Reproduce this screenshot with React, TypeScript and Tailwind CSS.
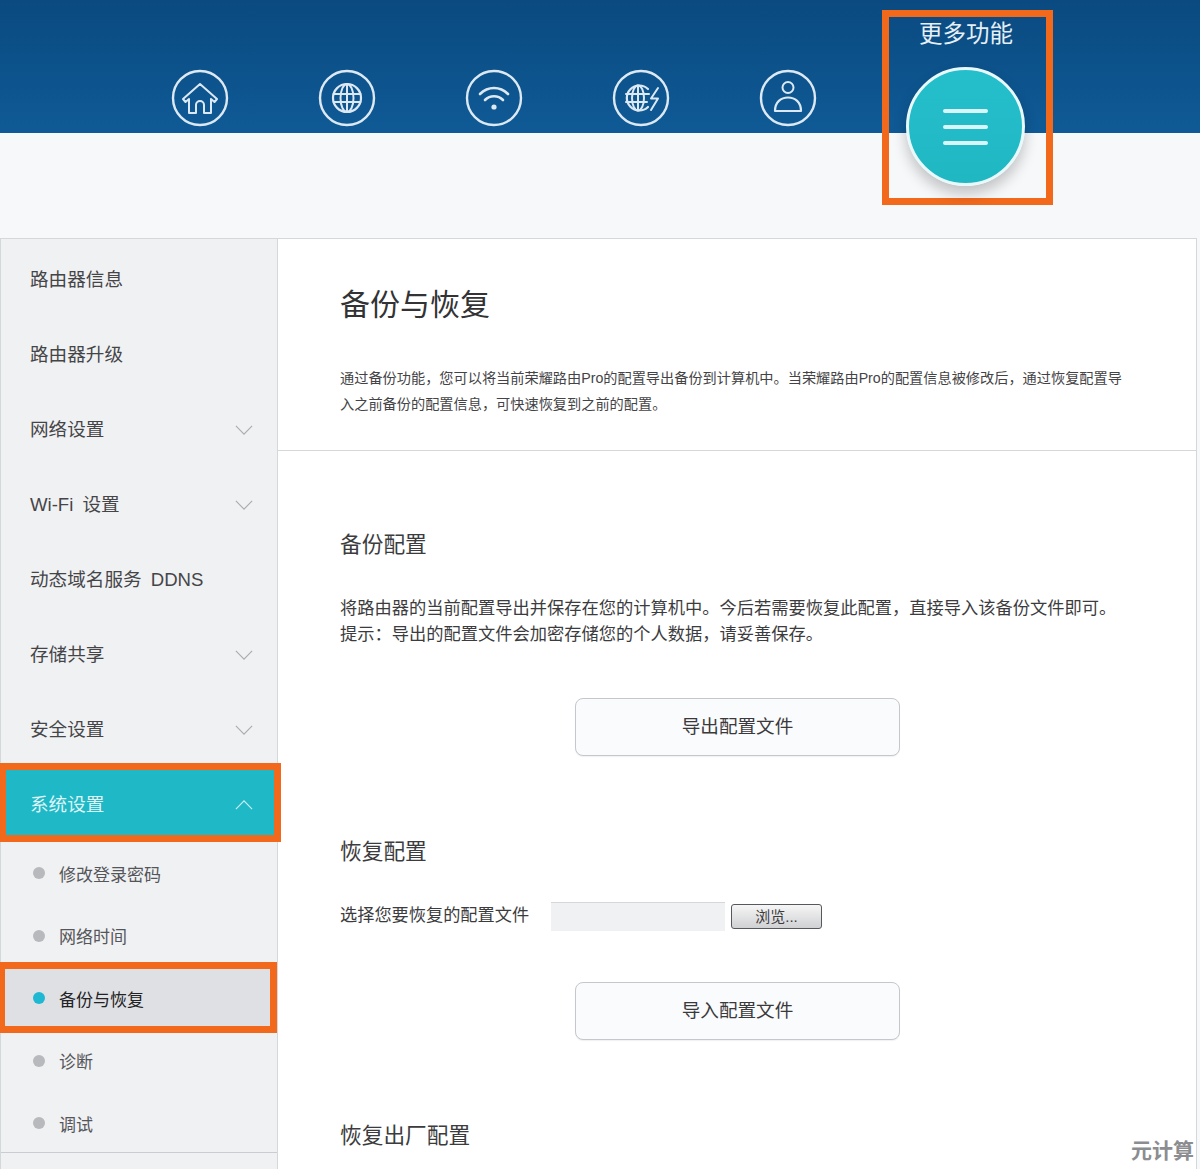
import type { ReactNode } from 'react';

const font = "font-['Liberation_Sans','Noto_Sans_CJK_SC',sans-serif]";

function Ring({ children }: { children: ReactNode }) {
  return (
    <svg width="58" height="58" viewBox="0 0 58 58" fill="none" stroke="#dce9f3" strokeWidth="2" strokeLinecap="round" strokeLinejoin="round">
      <circle cx="29" cy="29" r="27" strokeWidth="2.4" />
      {children}
    </svg>
  );
}

const navIcons = [
  <Ring key="home">
    <path d="M12 30 29 15 46 30 43.5 33 40 30V44H33V36A4 4 0 0 0 25 36V44H18V30L14.500 33Z" />
  </Ring>,
  <Ring key="globe">
    <circle cx="29" cy="29" r="14" strokeWidth="2.2" />
    <ellipse cx="29" cy="29" rx="6.5" ry="14" />
    <path d="M29 15V43M15.500 25H42.500M15.500 33H42.500" />
  </Ring>,
  <Ring key="wifi">
    <path d="M15 25C23 17 35 17 43 25M20 31C25 26 33 26 38 31" strokeWidth="2.6" />
    <circle cx="29" cy="38" r="2.6" fill="#dce9f3" stroke="none" />
  </Ring>,
  <Ring key="globe-bolt">
    <path d="M36 20A12.500 12.500 0 1 0 36 38" strokeWidth="2.2" />
    <ellipse cx="26" cy="29" rx="6" ry="12.500" />
    <path d="M26 16.500V41.500M14 25H37M14 33H35M46 19 39 29.500H46L39 41" />
  </Ring>,
  <Ring key="user">
    <circle cx="29" cy="18.500" r="5.500" />
    <path d="M16 42C16 33 22 28.500 29 28.500 36 28.500 42 33 42 42Z" strokeWidth="2.2" />
  </Ring>,
];

const menu: { label: string; chevron?: boolean }[] = [
  { label: '路由器信息' },
  { label: '路由器升级' },
  { label: '网络设置', chevron: true },
  { label: 'Wi-Fi 设置', chevron: true },
  { label: '动态域名服务 DDNS' },
  { label: '存储共享', chevron: true },
  { label: '安全设置', chevron: true },
];

const subMenu = ['修改登录密码', '网络时间', '备份与恢复', '诊断', '调试'];

function Chevron({ up, color }: { up?: boolean; color: string }) {
  return (
    <svg width="18" height="10" viewBox="0 0 20 11" fill="none" stroke={color} strokeWidth="1.3" className="mr-[24px]">
      <path d={up ? 'M1 10 10 1 19 10' : 'M1 1 10 10 19 1'} />
    </svg>
  );
}

function ActionButton({ label }: { label: string }) {
  return (
    <div className="ml-[235px] w-[325px] h-[58px] rounded-lg border border-[#c4c8cc] bg-[#fafbfc] flex items-center justify-center text-[18.6px] text-[#3a3a3c] shadow-[0_1px_1px_rgba(0,0,0,0.06)]">
      {label}
    </div>
  );
}

export default function App() {
  return (
    <div className={`${font} relative w-[1200px] h-[1169px] overflow-hidden bg-[#f7f8fa] text-[#3c3c3e]`}>
      <header className="h-[133px] bg-gradient-to-b from-[#0a4a80] to-[#0f5a96] flex items-end pl-[171px] pb-[6px] gap-[89px]">
        {navIcons}
      </header>

      {/* 更多功能 button hangs over the header edge */}
      <div className="absolute left-[882px] top-[10px] w-[171px] h-[195px] border-[7px] border-[#f2691c] z-10 flex flex-col items-center">
        <span className="-mt-[1px] text-[23.500px] leading-[36px] text-[#e6eff6] -ml-[3px]">更多功能</span>
        <div className="mt-[15px] -ml-[5px] shrink-0 w-[119px] h-[119px] rounded-full bg-gradient-to-b from-[#25bfcc] to-[#1fb7c2] border-[3px] border-[#e8f9fb] shadow-[0_8px_14px_rgba(0,0,0,0.22)] flex flex-col items-center justify-center gap-[12px]">
          <span className="w-[45px] h-[4px] bg-[#d8f6f7] rounded-sm" />
          <span className="w-[45px] h-[4px] bg-[#d8f6f7] rounded-sm" />
          <span className="w-[45px] h-[4px] bg-[#d8f6f7] rounded-sm" />
        </div>
      </div>

      <div className="mt-[105px] mr-[3px] flex h-[931px] border-t border-[#d5d8db]">
        <aside className="w-[278px] shrink-0 bg-[#f0f1f3] border-x border-[#d5d8db] pt-[3px] text-[18.600px] text-[#454548]">
          {menu.map((item) => (
            <div key={item.label} className="h-[75px] flex items-center justify-between pl-[29px]">
              <span className="[word-spacing:4px]">{item.label}</span>
              {item.chevron && <Chevron color="#a9adb2" />}
            </div>
          ))}

          <div className="relative h-[75px] -ml-px bg-[#1fb8c6] flex items-center justify-between pl-[30px] text-[#dff5f6]">
            <span>系统设置</span>
            <Chevron up color="#cdeef1" />
            <div className="absolute left-0 top-[-4px] w-[281px] h-[79px] border-[7px] border-l-[6px] border-[#f2691c]" />
          </div>

          <div className="border-b border-[#c9ccd0] h-[311px] text-[17px] text-[#55565a]">
            {subMenu.map((label) => {
              const active = label === '备份与恢复';
              return (
                <div
                  key={label}
                  className={`relative h-[62.500px] flex items-center pl-[32px] gap-[14px] ${active ? 'bg-[#dfe0e3] text-[#222224]' : ''}`}
                >
                  <span className={`w-[12px] h-[12px] rounded-full ${active ? 'bg-[#1fb8d2]' : 'bg-[#b7b9bc]'}`} />
                  <span className="pt-[4px]">{label}</span>
                  {active && <div className="absolute -left-px -top-[5px] w-[277px] h-[71px] border-[7px] border-l-[5px] border-[#f2691c]" />}
                </div>
              );
            })}
          </div>
        </aside>

        <main className="flex-1 bg-white border-r border-[#d5d8db]">
          <section className="h-[212px] border-b border-[#d5d8db] pl-[62px] pt-[44px]">
            <h1 className="text-[30px] leading-[44px] font-normal text-[#333335]">备份与恢复</h1>
            <p className="mt-[38px] text-[14.200px] leading-[26px] text-[#444446] whitespace-nowrap">
              通过备份功能，您可以将当前荣耀路由Pro的配置导出备份到计算机中。当荣耀路由Pro的配置信息被修改后，通过恢复配置导
              <br />
              入之前备份的配置信息，可快速恢复到之前的配置。
            </p>
          </section>

          <section className="pl-[62px]">
            <h2 className="pt-[77px] text-[21.700px] leading-[34px] text-[#3c3c3e]">备份配置</h2>
            <p className="mt-[33px] text-[17.250px] leading-[26px] whitespace-nowrap text-[#3c3c3e]">
              将路由器的当前配置导出并保存在您的计算机中。今后若需要恢复此配置，直接导入该备份文件即可。
              <br />
              提示：导出的配置文件会加密存储您的个人数据，请妥善保存。
            </p>
            <div className="mt-[51px]">
              <ActionButton label="导出配置文件" />
            </div>

            <h2 className="mt-[79px] text-[21.700px] leading-[34px] text-[#3c3c3e]">恢复配置</h2>
            <div className="mt-[32px] h-[30px] flex items-center text-[17.200px]">
              <span className="w-[211px]">选择您要恢复的配置文件</span>
              <span className="w-[174px] h-[29px] bg-[#f0f1f2] border-t border-[#d5d7d9]" />
              <span className="ml-[6px] w-[91px] h-[25px] rounded-[3px] border border-[#55595e] bg-gradient-to-b from-[#f6f6f6] to-[#d0d1d3] flex items-center justify-center text-[15px] leading-none">
                浏览...
              </span>
            </div>
            <div className="mt-[51px]">
              <ActionButton label="导入配置文件" />
            </div>

            <h2 className="mt-[79px] text-[21.700px] leading-[34px] text-[#3c3c3e]">恢复出厂配置</h2>
          </section>
        </main>
      </div>

      <span className="absolute right-[6px] bottom-[3px] text-[21px] leading-[30px] font-bold text-[#8b8d90]">元计算</span>
    </div>
  );
}
